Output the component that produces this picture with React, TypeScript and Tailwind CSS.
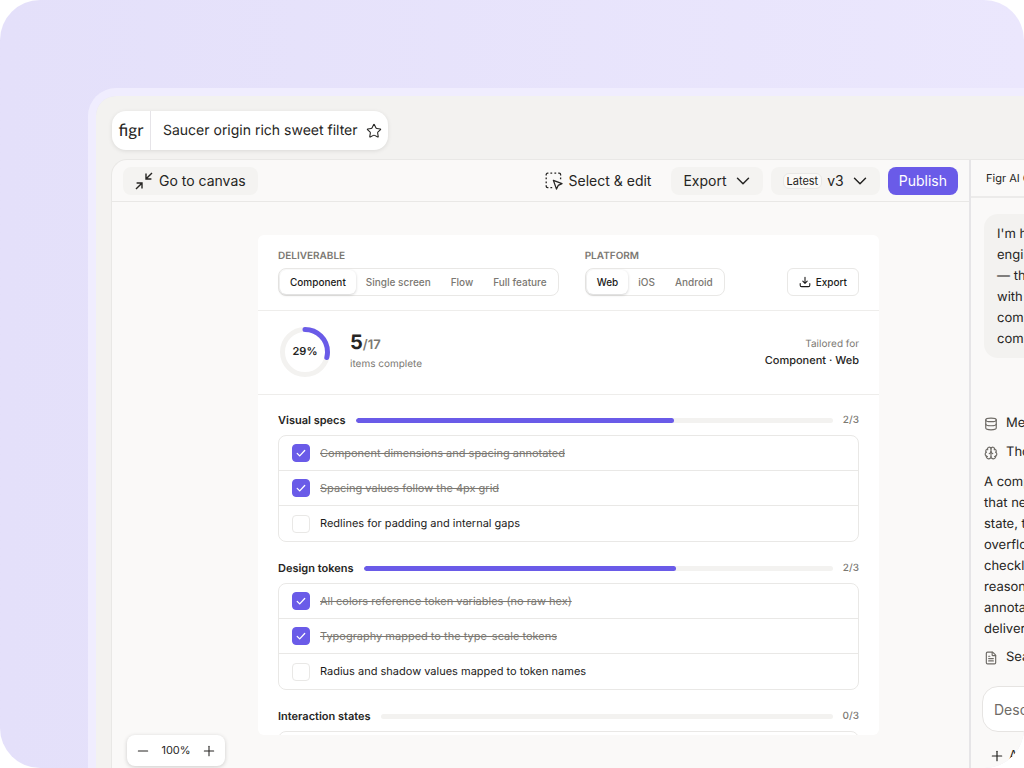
import { useState } from 'react';
import { Brain, ChevronDown, Database, FileText, Minus, Plus, Star } from 'lucide-react';
import clsx from 'clsx';

const deliverables = ['Component', 'Single screen', 'Flow', 'Full feature'];
const platforms = ['Web', 'iOS', 'Android'];

const initialSections = [
  {
    title: 'Visual specs',
    total: 3,
    items: [
      { label: 'Component dimensions and spacing annotated', done: true },
      { label: 'Spacing values follow the 4px grid', done: true },
      { label: 'Redlines for padding and internal gaps', done: false },
    ],
  },
  {
    title: 'Design tokens',
    total: 3,
    items: [
      { label: 'All colors reference token variables (no raw hex)', done: true },
      { label: 'Typography mapped to the type-scale tokens', done: true },
      { label: 'Radius and shadow values mapped to token names', done: false },
    ],
  },
  {
    title: 'Interaction states',
    total: 3,
    items: [],
  },
];

const promptLines = ["I'm ha", 'engine', '— the', 'with a', 'comp', 'comm'];
const replyLines = ['A comp', 'that nee', 'state, to', 'overflow', 'checklist', 'reasons', 'annotat', 'deliver'];

const CollapseIcon = () => (
  <svg className="size-[18px]" viewBox="0 0 18 18" fill="none" stroke="currentColor" strokeWidth="1.4">
    <path d="M17 1 11.2 6.8M11 1.6v5.4h5.4" />
    <path d="M1 17l5.8-5.8M1.6 11H7v5.4" />
  </svg>
);

const SelectIcon = () => (
  <svg className="size-[18px]" viewBox="0 0 18 18" fill="none" stroke="currentColor" strokeWidth="1.3" strokeLinejoin="round">
    <path d="M1.2 3.4V2.6a1.4 1.4 0 0 1 1.4-1.4h.8M5.4 1.2h1.8M9.4 1.2h1.8M13.2 1.2h1a1.4 1.4 0 0 1 1.4 1.4v.8M15.6 5.4v1.8M1.2 5.4v1.8M1.2 9.4v1.8M1.2 13.2v1a1.4 1.4 0 0 0 1.4 1.4h.8M5.4 15.6h1.8" />
    <path d="M8.4 8.4l8.6 3.2-3.8 1.8-1.7 3.7z" />
  </svg>
);

const DownloadIcon = () => (
  <svg className="size-3" viewBox="0 0 12 12" fill="none" stroke="currentColor" strokeWidth="1.1" strokeLinecap="round" strokeLinejoin="round">
    <path d="M6 1.2v6M3.8 5.2 6 7.4l2.2-2.2M1.2 7.6v1.6a1.4 1.4 0 0 0 1.4 1.4h6.8a1.4 1.4 0 0 0 1.4-1.4V7.6" />
  </svg>
);

const TopBar = () => (
  <header className="px-4 pt-[15px]">
    <div className="flex h-[39px] w-fit items-stretch rounded-[14px] bg-white shadow-[0_1px_4px_rgba(0,0,0,0.1)]">
      <div className="flex w-[39px] items-center justify-center border-r border-[#e6e4e8] pb-[2px] font-['Lato',sans-serif] text-[17px] leading-5">
        figr
      </div>
      <div className="flex items-center gap-2 pr-[6px] pl-3">
        <h1 className="pt-px text-sm">Saucer origin rich sweet filter</h1>
        <button aria-label="Add to favourites">
          <Star className="size-4" strokeWidth={1.6} />
        </button>
      </div>
    </div>
  </header>
);

const Toolbar = () => (
  <div className="flex h-[42px] items-center justify-between border-b border-[#e9e8e6] pr-[11px] pl-[11px] text-sm">
    <button className="flex h-7 items-center gap-[6px] rounded-lg bg-[#f4f3f1] px-3">
      <CollapseIcon />
      Go to canvas
    </button>
    <div className="flex items-center gap-2">
      <button className="flex h-7 items-center gap-[6px] px-3">
        <SelectIcon />
        Select &amp; edit
      </button>
      <button className="flex h-7 items-center gap-[5px] rounded-lg bg-[#f4f3f1] pr-[9px] pl-3">
        Export
        <ChevronDown className="size-[22px]" strokeWidth={1.6} />
      </button>
      <button className="flex h-7 items-center gap-[5px] rounded-lg bg-[#f4f3f1] pr-[9px] pl-3">
        <span className="rounded-md border border-[#e9e8e6] bg-[#faf9f7] px-[3px] text-[11px] leading-[14px]">Latest</span>
        v3
        <ChevronDown className="size-[22px]" strokeWidth={1.6} />
      </button>
      <button className="h-7 rounded-lg bg-[#6a5be8] px-[11px] text-white">Publish</button>
    </div>
  </div>
);

const Segmented = ({ label, options }: { label: string; options: string[] }) => {
  const [active, setActive] = useState(options[0]);

  return (
    <div role="group" aria-label={label}>
      <div className="mb-1 text-[10px] leading-4 font-semibold text-[#7b7872] uppercase">{label}</div>
      <div className="flex h-7 rounded-lg border border-[#e9e8e6] p-px">
        {options.map(option => (
          <button
            key={option}
            aria-pressed={option === active}
            onClick={() => setActive(option)}
            className={clsx(
              'rounded-md px-[10px] text-[10px] font-medium whitespace-nowrap',
              option === active ? 'bg-white text-[#1c1b1a] shadow-[0_1px_3px_rgba(0,0,0,0.18)]' : 'text-[#7b7872]'
            )}
          >
            {option}
          </button>
        ))}
      </div>
    </div>
  );
};

const ProgressRing = ({ value }: { value: number }) => (
  <div className="grid size-[54px] place-items-center">
    <svg className="col-start-1 row-start-1 size-[54px] -rotate-90" viewBox="0 0 54 54" fill="none" strokeWidth="5">
      <circle cx="27" cy="27" r="22.5" stroke="#f3f2f0" />
      <circle cx="27" cy="27" r="22.5" stroke="#6a5be8" strokeLinecap="round" pathLength="100" strokeDasharray={`${value} 100`} />
    </svg>
    <span className="col-start-1 row-start-1 text-[11px] font-semibold">{value}%</span>
  </div>
);

const Checklist = () => {
  const [sections, setSections] = useState(initialSections);

  const toggle = (title: string, label: string) => {
    setSections(prev =>
      prev.map(section =>
        section.title === title
          ? { ...section, items: section.items.map(item => (item.label === label ? { ...item, done: !item.done } : item)) }
          : section
      )
    );
  };

  return (
    <div className="flex flex-col gap-[18px] px-5 pt-[17px]">
      {sections.map(section => {
        const done = section.items.filter(item => item.done).length;
        return (
          <section key={section.title}>
            <div className="mb-[7px] flex h-4 items-center">
              <h2 className="text-[11px] font-semibold">{section.title}</h2>
              <div className="mx-[10px] h-[5px] flex-1 overflow-hidden rounded-full bg-[#f3f2f0]">
                <div className="h-full rounded-full bg-[#6a5be8]" style={{ width: `${(done / section.total) * 100}%` }} />
              </div>
              <span className="text-[10px] font-medium text-[#7b7872]">{done}/{section.total}</span>
            </div>
            <ul className="min-h-9 divide-y divide-[#e9e8e6] rounded-lg border border-[#e9e8e6]">
              {section.items.map(item => (
                <li key={item.label} className="h-[35px]">
                  <label className="flex h-full items-center gap-[10px] px-[13px]">
                    <span className="grid size-[18px] place-items-center">
                      <input
                        type="checkbox"
                        checked={item.done}
                        onChange={() => toggle(section.title, item.label)}
                        className="col-start-1 row-start-1 size-[18px] appearance-none rounded border border-[#e9e8e6] bg-white checked:border-[#6a5be8] checked:bg-[#6a5be8]"
                      />
                      {item.done && (
                        <svg className="pointer-events-none z-10 col-start-1 row-start-1 size-3" viewBox="0 0 12 12" fill="none" stroke="white" strokeWidth="1.3" strokeLinecap="round" strokeLinejoin="round">
                          <path d="M2.2 6.4l2.5 2.5 5-5.4" />
                        </svg>
                      )}
                    </span>
                    <span className={clsx('text-[11px]', item.done ? 'text-[#7b7872] line-through' : 'text-[#1c1b1a]')}>{item.label}</span>
                  </label>
                </li>
              ))}
            </ul>
          </section>
        );
      })}
    </div>
  );
};

const HandoffCard = () => (
  <div className="mt-[33px] mr-[90px] mb-[33px] ml-[146px] min-h-0 flex-1 overflow-hidden rounded-md bg-white">
    <div className="flex h-[76px] items-end justify-between border-b border-[#eeedeb] px-5 pb-[14px]">
      <div className="flex gap-[26px]">
        <Segmented label="Deliverable" options={deliverables} />
        <Segmented label="Platform" options={platforms} />
      </div>
      <button className="flex h-7 items-center gap-[5px] rounded-md border border-[#e9e8e6] px-[11px] text-[10px] font-medium text-[#1c1b1a]">
        <DownloadIcon />
        Export
      </button>
    </div>
    <div className="flex h-[84px] items-center border-b border-[#eeedeb] px-5 pb-[2px]">
      <ProgressRing value={29} />
      <div className="ml-[18px]">
        <div className="text-xl leading-[22px] font-bold">
          5<span className="text-[13px] font-semibold text-[#7b7872]">/17</span>
        </div>
        <div className="text-[10px] leading-4 text-[#7b7872]">items complete</div>
      </div>
      <div className="ml-auto text-right">
        <div className="text-[10px] leading-4 text-[#7b7872]">Tailored for</div>
        <div className="text-[11px] leading-4 font-medium">Component · Web</div>
      </div>
    </div>
    <Checklist />
  </div>
);

const ChatPanel = () => (
  <aside className="w-[55px] shrink-0 overflow-hidden border-l-2 border-[#e6e5e7] text-[13px] leading-[21px]">
    <div className="flex h-full w-80 flex-col whitespace-nowrap">
      <div className="h-[38px] border-b-2 border-[#ecebea] px-[15px] text-[11px] leading-9">Figr AI C</div>
      <div className="mx-[13px] mt-4 rounded-[14px] bg-[#f3f2f0] px-[13px] pt-[10px] pb-2">
        {promptLines.map(line => <div key={line}>{line}</div>)}
      </div>
      <div className="mt-[55px] flex h-[21px] items-center gap-2 px-[13px]">
        <Database className="size-[14px] text-[#6e6b66]" strokeWidth={2} />
        Mem
      </div>
      <div className="mt-2 flex h-[21px] items-center gap-2 px-[13px]">
        <Brain className="size-[14px] text-[#6e6b66]" strokeWidth={2} />
        Thou
      </div>
      <div className="mt-[9px] px-[13px]">
        {replyLines.map(line => <div key={line}>{line}</div>)}
      </div>
      <div className="mt-[7px] flex h-[21px] items-center gap-2 px-[13px]">
        <FileText className="size-[14px] text-[#6e6b66]" strokeWidth={2} />
        Sear
      </div>
      <input
        aria-label="Message"
        placeholder="Describe"
        className="mx-[11px] mt-[18px] h-[46px] shrink-0 rounded-2xl border border-[#e6e4e2] bg-white px-[11px] text-sm placeholder:text-[#6e6b66]"
      />
      <div className="mt-[13px] flex px-[18px]">
        <button className="flex items-center gap-1">
          <Plus className="size-4" strokeWidth={1.8} />
          A
        </button>
      </div>
    </div>
  </aside>
);

const App = () => {
  const [zoom, setZoom] = useState(100);

  return (
    <div className="h-screen overflow-hidden rounded-[40px] bg-linear-to-r from-[#e4e0fa] to-[#ebe7fd] pt-[88px] pl-[88px] font-['Inter',sans-serif] text-[#262523] antialiased [text-rendering:geometricPrecision]">
      <div className="h-full rounded-tl-[28px] border-t-8 border-l-8 border-[#f0edfe]">
        <div className="flex h-full flex-col rounded-tl-[20px] bg-[#f3f2f0]">
          <TopBar />
          <div className="relative mt-[9px] ml-[15px] flex min-h-0 flex-1 rounded-tl-2xl border-t border-l border-[#e9e8e6] bg-[#faf9f8]">
            <main className="flex min-w-0 flex-1 flex-col">
              <Toolbar />
              <HandoffCard />
            </main>
            <ChatPanel />
            <div className="absolute bottom-[2px] left-[15px] flex h-[31px] items-center rounded-lg bg-white px-2 text-[11px] shadow-[0_1px_4px_rgba(0,0,0,0.18)]">
              <button aria-label="Zoom out" onClick={() => setZoom(zoom - 10)}>
                <Minus className="size-4" strokeWidth={1.6} />
              </button>
              <span className="w-[50px] text-center">{zoom}%</span>
              <button aria-label="Zoom in" onClick={() => setZoom(zoom + 10)}>
                <Plus className="size-4" strokeWidth={1.6} />
              </button>
            </div>
          </div>
        </div>
      </div>
    </div>
  );
};

export default App;
